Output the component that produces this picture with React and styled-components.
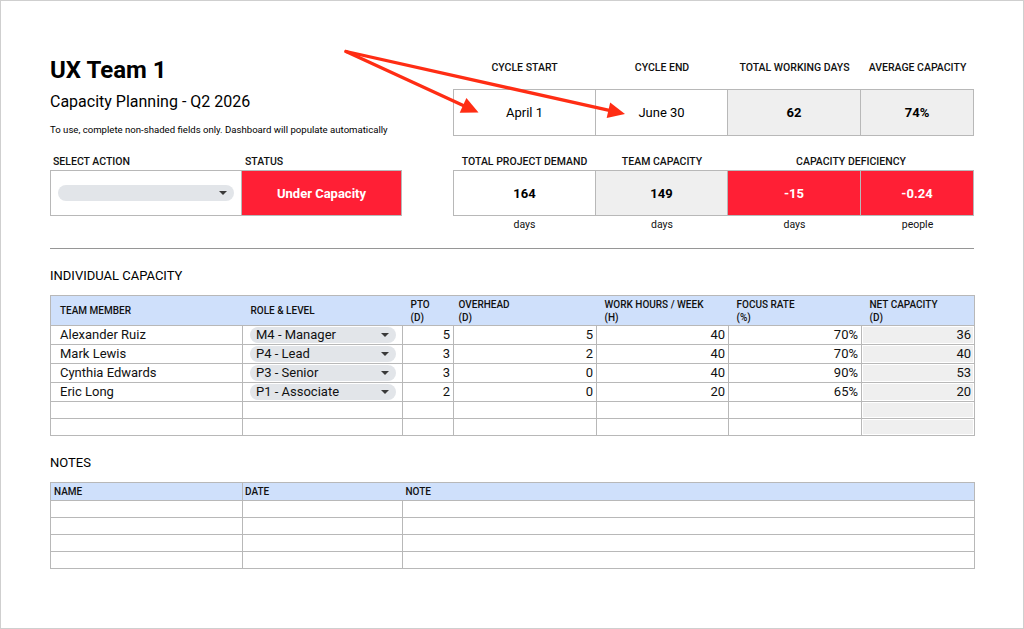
import React from "react";
import styled, { createGlobalStyle } from "styled-components";

const RED = "#ff1f35";
const LINE = "#b8b8b8";
const SHADE = "#efefef";
const HEAD = "#cfe0fb";
const ARROW = "#ff2d14";

const GlobalStyle = createGlobalStyle`
  html, body {
    margin: 0;
    padding: 0;
    background: #fff;
  }
  body {
    font-family: Roboto, "Liberation Sans", Arial, sans-serif;
    color: #111;
  }
  * {
    box-sizing: border-box;
  }
`;

const Frame = styled.div`
  position: relative;
  width: 1024px;
  height: 629px;
  border: 1px solid #cfcfcf;
  padding: 55px 49px 0 49px;
  background: #fff;
  overflow: hidden;
`;

const Top = styled.div`
  display: grid;
  grid-template-columns: 192px 160px 51px 143px 132px 133px 113px;
  grid-template-rows: 33px 47px 34px 46px 18px;
`;

const TitleBlock = styled.div`
  grid-column: 1 / 4;
  grid-row: 1 / 4;
`;

const Title = styled.h1`
  margin: 0;
  font-size: 24px;
  line-height: 28px;
  font-weight: 700;
  color: #000;
`;

const Subtitle = styled.div`
  margin-top: 8px;
  font-size: 16px;
  line-height: 20px;
  color: #000;
`;

const Hint = styled.div`
  margin-top: 11px;
  font-size: 9.6px;
  line-height: 14px;
  color: #000;
`;

const Caption = styled.div`
  grid-column: ${(p) => p.$col};
  grid-row: ${(p) => p.$row};
  align-self: ${(p) => (p.$row === 1 ? "start" : p.$row === 5 ? "center" : "end")};
  padding-top: ${(p) => (p.$row === 1 ? "5px" : "0")};
  padding-bottom: ${(p) => (p.$row === 3 ? "1px" : "0")};
  padding-left: ${(p) => (p.$left ? "3px" : "0")};
  text-align: ${(p) => (p.$left ? "left" : "center")};
  font-size: 10.5px;
  line-height: 14px;
  font-weight: ${(p) => (p.$row === 5 ? 400 : 500)};
  color: #111;
  white-space: nowrap;
`;

const tones = {
  plain: { bg: "#fff", fg: "#000" },
  shaded: { bg: SHADE, fg: "#000" },
  alert: { bg: RED, fg: "#fff" },
};

const Box = styled.div`
  grid-column: ${(p) => p.$col};
  grid-row: ${(p) => p.$row};
  display: flex;
  align-items: center;
  justify-content: center;
  border: 1px solid ${LINE};
  border-left-width: ${(p) => (p.$joined ? 0 : 1)}px;
  background: ${(p) => tones[p.$tone || "plain"].bg};
  color: ${(p) => tones[p.$tone || "plain"].fg};
  font-size: 13px;
  font-weight: ${(p) => (p.$bold ? 700 : 400)};
`;

const SelectBox = styled.div`
  grid-column: 1;
  grid-row: 4;
  display: flex;
  align-items: center;
  padding: 0 7px;
  border: 1px solid ${LINE};
  background: #fff;
`;

const Pill = styled.div`
  flex: 1;
  display: flex;
  align-items: center;
  justify-content: space-between;
  height: 16px;
  margin: ${(p) => p.$margin || "0"};
  padding: 0 7px 0 6px;
  border-radius: 8px;
  background: #e2e5e9;
  font-size: 13px;
  line-height: 16px;
  color: #111;
  white-space: nowrap;
`;

const Caret = styled.span`
  width: 0;
  height: 0;
  border-left: 4px solid transparent;
  border-right: 4px solid transparent;
  border-top: 4px solid #3a3a3a;
  margin-left: auto;
`;

const Rule = styled.hr`
  margin: 14px 0 0;
  border: 0;
  border-top: 1.5px solid #969696;
  height: 0;
`;

const SectionTitle = styled.h2`
  margin: ${(p) => (p.$first ? "19px" : "19px")} 0 11px;
  font-size: 13px;
  line-height: 16px;
  font-weight: 400;
  color: #000;
`;

const Sheet = styled.table`
  width: 924px;
  table-layout: fixed;
  border-collapse: collapse;
  border: 1px solid ${LINE};
`;

const HeadRow = styled.tr`
  height: ${(p) => p.$h}px;
  background: ${HEAD};
`;

const Th = styled.th`
  padding: 0 0 0 ${(p) => p.$pad || 8}px;
  border-bottom: 1px solid ${LINE};
  border-right: ${(p) => (p.$divider ? `1px solid ${LINE}` : "none")};
  text-align: left;
  vertical-align: middle;
  font-size: 10px;
  line-height: 13px;
  font-weight: 500;
  color: #111;
  white-space: nowrap;
`;

const Row = styled.tr`
  height: ${(p) => p.$h}px;
`;

const Td = styled.td`
  padding: ${(p) => (p.$num ? "0 3px 0 0" : p.$pill ? "0" : "0 0 0 9px")};
  border: 1px solid ${LINE};
  background: ${(p) => (p.$shaded ? SHADE : "#fff")};
  box-shadow: ${(p) => (p.$shaded ? "inset 0 0 0 1px #fff" : "none")};
  text-align: ${(p) => (p.$num ? "right" : "left")};
  vertical-align: middle;
  font-size: 13px;
  line-height: 16px;
  color: #111;
  white-space: nowrap;
  overflow: hidden;
`;

const Overlay = styled.svg`
  position: absolute;
  top: -1px;
  left: -1px;
  width: 1024px;
  height: 629px;
  pointer-events: none;
`;

const members = [
  { name: "Alexander Ruiz", role: "M4 - Manager", pto: 5, overhead: 5, hours: 40, focus: "70%", net: 36 },
  { name: "Mark Lewis", role: "P4 - Lead", pto: 3, overhead: 2, hours: 40, focus: "70%", net: 40 },
  { name: "Cynthia Edwards", role: "P3 - Senior", pto: 3, overhead: 0, hours: 40, focus: "90%", net: 53 },
  { name: "Eric Long", role: "P1 - Associate", pto: 2, overhead: 0, hours: 20, focus: "65%", net: 20 },
];

const Arrow = ({ from, to, head = 17, half = 8 }) => {
  const dx = to[0] - from[0];
  const dy = to[1] - from[1];
  const len = Math.hypot(dx, dy);
  const ux = dx / len;
  const uy = dy / len;
  const bx = to[0] - ux * head;
  const by = to[1] - uy * head;
  const pts = [
    [to[0], to[1]],
    [bx - uy * half, by + ux * half],
    [bx + uy * half, by - ux * half],
  ]
    .map((p) => p.join(","))
    .join(" ");
  return (
    <g>
      <line x1={from[0]} y1={from[1]} x2={bx + ux * 2} y2={by + uy * 2} stroke={ARROW} strokeWidth="3.3" strokeLinecap="round" />
      <polygon points={pts} fill={ARROW} />
    </g>
  );
};

const App = () => {
  return (
    <>
      <GlobalStyle />
      <Frame>
        <Top>
          <TitleBlock>
            <Title>UX Team 1</Title>
            <Subtitle>Capacity Planning - Q2 2026</Subtitle>
            <Hint>To use, complete non-shaded fields only. Dashboard will populate automatically</Hint>
          </TitleBlock>

          <Caption $col="4" $row={1}>CYCLE START</Caption>
          <Caption $col="5" $row={1}>CYCLE END</Caption>
          <Caption $col="6" $row={1}>TOTAL WORKING DAYS</Caption>
          <Caption $col="7" $row={1}>AVERAGE CAPACITY</Caption>

          <Box $col="4" $row={2}>April 1</Box>
          <Box $col="5" $row={2} $joined>June 30</Box>
          <Box $col="6" $row={2} $joined $tone="shaded" $bold>62</Box>
          <Box $col="7" $row={2} $joined $tone="shaded" $bold>74%</Box>

          <Caption $col="1" $row={3} $left>SELECT ACTION</Caption>
          <Caption $col="2" $row={3} $left>STATUS</Caption>
          <Caption $col="4" $row={3}>TOTAL PROJECT DEMAND</Caption>
          <Caption $col="5" $row={3}>TEAM CAPACITY</Caption>
          <Caption $col="6 / 8" $row={3}>CAPACITY DEFICIENCY</Caption>

          <SelectBox>
            <Pill>
              <Caret />
            </Pill>
          </SelectBox>
          <Box $col="2" $row={4} $joined $tone="alert" $bold>Under Capacity</Box>

          <Box $col="4" $row={4} $bold>164</Box>
          <Box $col="5" $row={4} $joined $tone="shaded" $bold>149</Box>
          <Box $col="6" $row={4} $joined $tone="alert" $bold>-15</Box>
          <Box $col="7" $row={4} $joined $tone="alert" $bold>-0.24</Box>

          <Caption $col="4" $row={5}>days</Caption>
          <Caption $col="5" $row={5}>days</Caption>
          <Caption $col="6" $row={5}>days</Caption>
          <Caption $col="7" $row={5}>people</Caption>
        </Top>

        <Rule />

        <SectionTitle>INDIVIDUAL CAPACITY</SectionTitle>
        <Sheet>
          <colgroup>
            <col style={{ width: 192 }} />
            <col style={{ width: 160 }} />
            <col style={{ width: 51 }} />
            <col style={{ width: 143 }} />
            <col style={{ width: 132 }} />
            <col style={{ width: 133 }} />
            <col style={{ width: 113 }} />
          </colgroup>
          <thead>
            <HeadRow $h={30}>
              <Th $pad={9}>TEAM MEMBER</Th>
              <Th>ROLE &amp; LEVEL</Th>
              <Th>PTO<br />(D)</Th>
              <Th $pad={5}>OVERHEAD<br />(D)</Th>
              <Th>WORK HOURS / WEEK<br />(H)</Th>
              <Th>FOCUS RATE<br />(%)</Th>
              <Th>NET CAPACITY<br />(D)</Th>
            </HeadRow>
          </thead>
          <tbody>
            {members.map((m) => (
              <Row key={m.name} $h={19}>
                <Td>{m.name}</Td>
                <Td $pill>
                  <Pill $margin="0 6px 0 7px">
                    {m.role}
                    <Caret />
                  </Pill>
                </Td>
                <Td $num>{m.pto}</Td>
                <Td $num>{m.overhead}</Td>
                <Td $num>{m.hours}</Td>
                <Td $num>{m.focus}</Td>
                <Td $num $shaded>{m.net}</Td>
              </Row>
            ))}
            {[0, 1].map((i) => (
              <Row key={`blank-${i}`} $h={17}>
                <Td />
                <Td />
                <Td />
                <Td />
                <Td />
                <Td />
                <Td $shaded />
              </Row>
            ))}
          </tbody>
        </Sheet>

        <SectionTitle>NOTES</SectionTitle>
        <Sheet>
          <colgroup>
            <col style={{ width: 192 }} />
            <col style={{ width: 160 }} />
            <col style={{ width: 572 }} />
          </colgroup>
          <thead>
            <HeadRow $h={18}>
              <Th $pad={3} $divider>NAME</Th>
              <Th $pad={2}>DATE</Th>
              <Th $pad={3}>NOTE</Th>
            </HeadRow>
          </thead>
          <tbody>
            {[0, 1, 2, 3].map((i) => (
              <Row key={i} $h={17}>
                <Td />
                <Td />
                <Td />
              </Row>
            ))}
          </tbody>
        </Sheet>

        <Overlay viewBox="0 0 1024 629">
          <Arrow from={[346, 51.5]} to={[478.5, 112.5]} />
          <Arrow from={[346, 51.5]} to={[625, 114]} />
        </Overlay>
      </Frame>
    </>
  );
};

export default App;
